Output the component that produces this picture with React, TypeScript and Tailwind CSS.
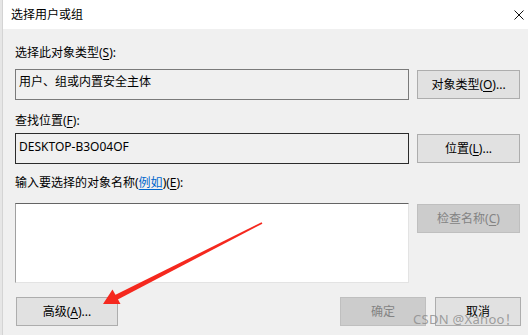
import * as React from 'react';

const font = { fontFamily: '"Noto Sans", "Noto Sans CJK SC", sans-serif' };

const Key: React.FC<{ k: string }> = ({ k }) => (
  <span className="underline underline-offset-2">{k}</span>
);

interface BtnProps {
  children: React.ReactNode;
  className?: string;
  disabled?: boolean;
}

const Btn: React.FC<BtnProps> = ({ children, className = '', disabled }) => (
  <div
    className={
      'h-[29px] flex items-center justify-center border text-[12px] leading-[16px] ' +
      (disabled
        ? 'bg-[#cccccc] border-[#bfbfbf] text-[#838383] '
        : 'bg-[#e1e1e1] border-[#adadad] text-black ') +
      className
    }
  >
    {children}
  </div>
);

export default function App() {
  return (
    <div
      className="relative w-[528px] h-[335px] overflow-hidden flex bg-[#f0f0f0] text-black"
      style={font}
    >
      <div className="w-[3px] h-full bg-[#e6e6e6] border-r border-[#d4d4d4] shrink-0" />
      <div className="flex-1 flex flex-col">
        {/* title bar */}
        <div className="h-[29px] bg-white flex items-center justify-between pl-[8px] pr-[4px]">
          <span className="text-[12px] leading-[16px]">选择用户或组</span>
          <svg width="10" height="10" viewBox="0 0 10 10" className="mr-[0px]">
            <path d="M0.5 0.5 L9.5 9.5 M9.5 0.5 L0.5 9.5" stroke="#111" strokeWidth="1" />
          </svg>
        </div>

        <div className="flex flex-col pl-[12px] pr-[7px] text-[12px] leading-[16px]">
          <div className="mt-[16px] h-[16px]">
            选择此对象类型(<Key k="S" />):
          </div>
          <div className="mt-[8px] flex items-center gap-[8px]">
            <div className="w-[394px] h-[31px] border border-[#7a7a7a] px-[3px] pt-[4px]">
              用户、组或内置安全主体
            </div>
            <Btn className="w-[103px]">
              对象类型(<Key k="O" />)...
            </Btn>
          </div>

          <div className="mt-[13px] h-[16px]">
            查找位置(<Key k="F" />):
          </div>
          <div className="mt-[4px] flex items-center gap-[8px]">
            <div className="w-[394px] h-[31px] border border-[#2b2b2b] px-[3px] pt-[5px]">
              DESKTOP-B3O04OF
            </div>
            <Btn className="w-[103px]">
              位置(<Key k="L" />)...
            </Btn>
          </div>

          <div className="mt-[11px] h-[16px]">
            输入要选择的对象名称(
            <span className="text-[#0066cc] underline underline-offset-2">例如</span>)(<Key k="E" />):
          </div>
          <div className="mt-[12px] flex items-start gap-[8px]">
            <div className="w-[394px] h-[80px] bg-white border-t border-t-[#646464] border-l border-l-[#a0a0a0] border-r border-r-[#e3e3e3] border-b border-b-[#e3e3e3]" />
            <Btn disabled className="w-[103px] mt-[1px]">
              检查名称(<Key k="C" />)
            </Btn>
          </div>

          <div className="mt-[14px] flex items-center">
            <Btn className="w-[102px] ml-[1px]">
              高级(<Key k="A" />)...
            </Btn>
            <div className="flex-1" />
            <Btn disabled className="w-[86px]">
              确定
            </Btn>
            <Btn className="w-[86px] ml-[9px]">取消</Btn>
          </div>
        </div>
      </div>

      {/* annotation arrow */}
      <svg
        className="absolute left-0 top-0 pointer-events-none"
        width="528"
        height="335"
        viewBox="0 0 528 335"
      >
        <polygon
          points="262.4,223.7 114.9,300.9 112.5,296.3 261.6,222.3"
          fill="#f5281e"
        />
        <polygon points="103,304 112.5,289.5 120.5,304" fill="#f5281e" />
      </svg>

      {/* watermark */}
      <div className="absolute left-[413px] top-[310px] text-[13px] leading-[18px] text-[#8a8a8a]/80 tracking-[0.3px] pointer-events-none">
        CSDN @Xahoo！
      </div>
    </div>
  );
}
